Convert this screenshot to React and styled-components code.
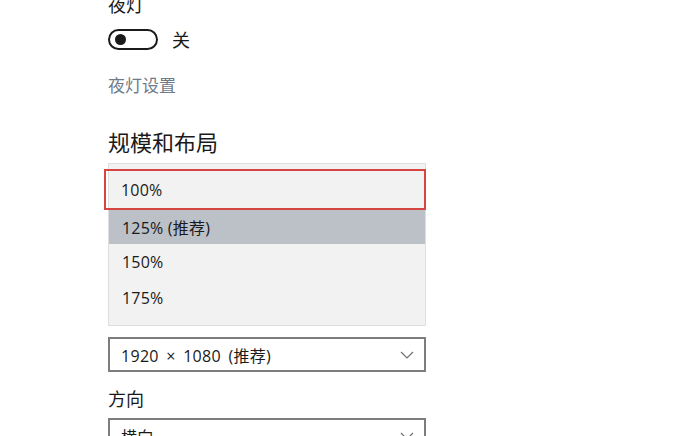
import React from 'react';
import styled, { createGlobalStyle } from 'styled-components';

const Global = createGlobalStyle`
  html, body {
    margin: 0;
    background: #fff;
    overflow: hidden;
  }
  body {
    font-family: "Open Sans", "Noto Sans CJK SC", sans-serif;
    color: #1a1a1a;
  }
`

const Page = styled.div`
  width: 692px;
  height: 436px;
  padding-left: 108px;
  box-sizing: border-box;
  display: flex;
  flex-direction: column;
  align-items: flex-start;
  overflow: hidden;
`

const Title = styled.div`
  font-family: "Noto Sans CJK SC", sans-serif;
  font-size: ${({ big }) => big ? '22px' : '18px'};
  line-height: ${({ big }) => big ? '30px' : '24px'};
  margin-top: ${({ top }) => top}px;
  flex-shrink: 0;
`

const ToggleRow = styled.div`
  display: flex;
  align-items: center;
  gap: 14px;
  height: 22px;
  margin-top: 12px;
  font-family: "Noto Sans CJK SC", sans-serif;
  font-size: 18px;
  line-height: 22px;
  flex-shrink: 0;
`

const Switch = styled.div`
  width: 50px;
  height: 21px;
  border: 2px solid #1a1a1a;
  border-radius: 12px;
  box-sizing: border-box;
  display: flex;
  align-items: center;
  padding-left: 5px;
`

const Knob = styled.span`
  width: 11px;
  height: 11px;
  border-radius: 50%;
  background: #1a1a1a;
`

const Link = styled.div`
  font-family: "Noto Sans CJK SC", sans-serif;
  font-size: 17px;
  line-height: 22px;
  color: #6f7b88;
  margin-top: 24px;
  flex-shrink: 0;
`

const List = styled.div`
  width: 318px;
  margin-top: 7px;
  padding: 5px 0 9px;
  background: #f2f2f2;
  border: 1px solid #dedede;
  box-sizing: border-box;
  display: flex;
  flex-direction: column;
  flex-shrink: 0;
`

const Option = styled.div`
  display: flex;
  align-items: center;
  height: ${({ outlined, active }) => outlined ? '41px' : active ? '34px' : '36px'};
  padding-left: ${({ outlined }) => outlined ? '15px' : '13px'};
  font-size: 16px;
  letter-spacing: 0.2px;
  box-sizing: border-box;
  background: ${({ active }) => active ? '#bcc0c7' : 'transparent'};
  border: ${({ outlined }) => outlined ? '2px solid #d64541' : 'none'};
  margin-left: ${({ outlined }) => outlined ? '-5px' : '0'};
  margin-right: ${({ outlined }) => outlined ? '-1px' : '0'};
`

const Select = styled.div`
  width: 318px;
  height: 35px;
  margin-top: ${({ top }) => top}px;
  border: 2px solid #7d7d7d;
  box-sizing: border-box;
  display: flex;
  align-items: center;
  justify-content: space-between;
  padding: 0 10px 0 11px;
  font-size: 16px;
  letter-spacing: 0.3px;
  word-spacing: 3px;
  flex-shrink: 0;
`

const Chevron = () => (
  <svg width="14" height="8" viewBox="0 0 14 8" fill="none">
    <path d="M1 1l6 6 6-6" stroke="#707070" strokeWidth="1.2" />
  </svg>
)

const App = () => (
  <>
    <Global />
    <Page>
      <Title top={-8}>夜灯</Title>
      <ToggleRow>
        <Switch><Knob /></Switch>
        <span>关</span>
      </ToggleRow>
      <Link>夜灯设置</Link>
      <Title big top={30}>规模和布局</Title>
      <List>
        <Option outlined>100%</Option>
        <Option active>125% (推荐)</Option>
        <Option>150%</Option>
        <Option>175%</Option>
      </List>
      <Select top={11}>
        <span>1920 × 1080 (推荐)</span>
        <Chevron />
      </Select>
      <Title top={14}>方向</Title>
      <Select top={8}>
        <span>横向</span>
        <Chevron />
      </Select>
    </Page>
  </>
)

export default App;
